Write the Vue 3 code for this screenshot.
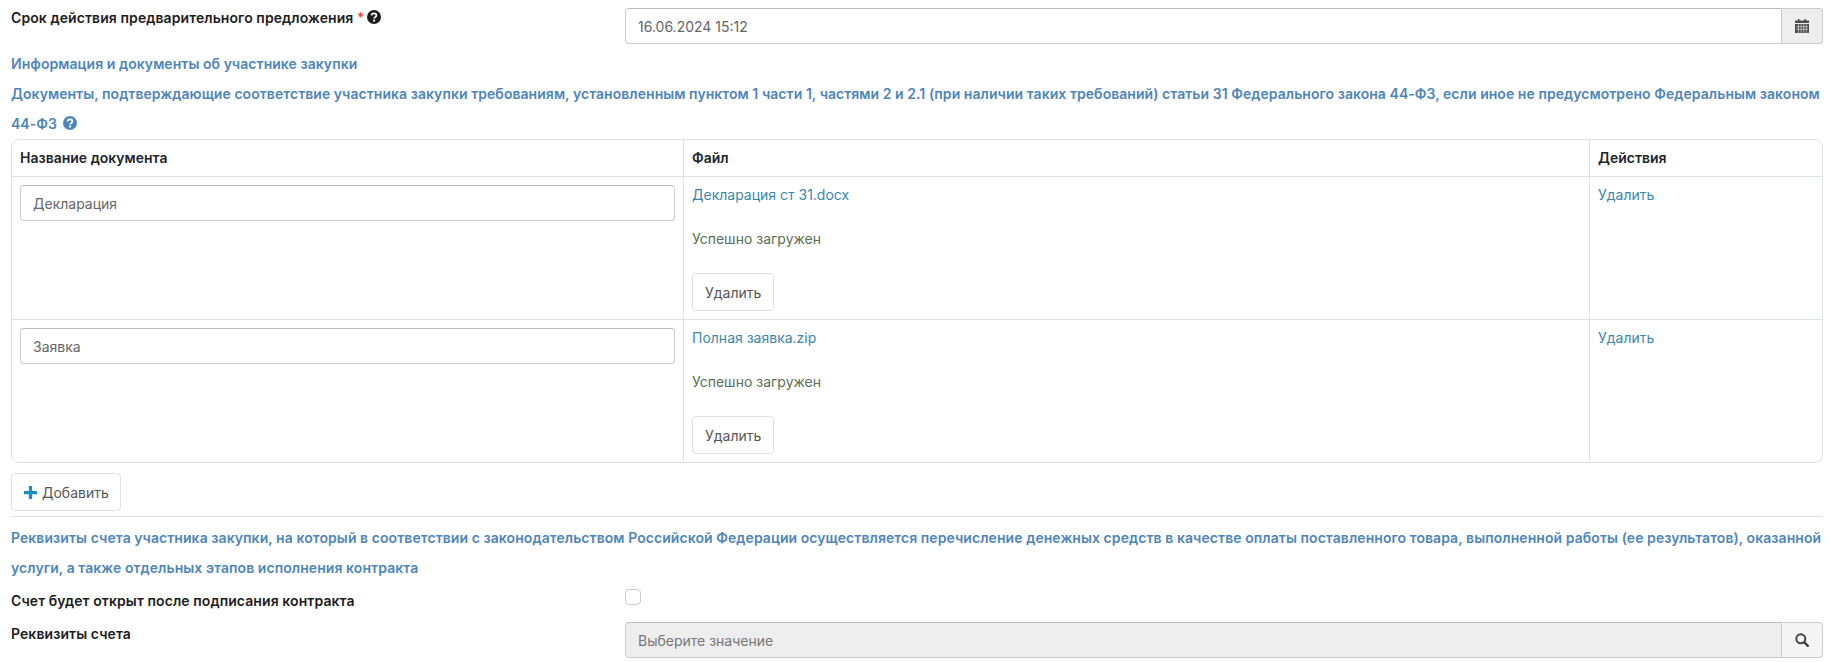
<script setup>
const rows = [
  { name: 'Декларация', file: 'Декларация ст 31.docx' },
  { name: 'Заявка', file: 'Полная заявка.zip' }
]
</script>

<template>
  <div class="page">
    <div class="form-row deadline-row">
      <label class="label">
        Срок действия предварительного предложения <span class="req">*</span>
        <svg class="help" viewBox="0 0 14 14"><circle cx="7" cy="7" r="7" fill="currentColor" /><path d="M4.600 5.400C4.700 4 5.700 3.300 7 3.300c1.400 0 2.400.8 2.400 2 0 1-.6 1.500-1.300 1.900-.6.4-.9.7-.9 1.400" fill="none" stroke="#fff" stroke-width="1.700" /><rect x="6.100" y="9.600" width="2" height="1.900" fill="#fff" /></svg>
      </label>
      <div class="input-group">
        <input class="control" value="16.06.2024 15:12" />
        <span class="addon">
          <svg class="addon-icon" viewBox="0 0 14 14"><path d="M3 0h1.500v2H3zM9.500 0H11v2H9.500z" fill="#4a4a4a" /><path d="M0 1.500h14V4H0z" fill="#4a4a4a" /><path d="M0 5h14v9H0z" fill="#4a4a4a" /><path d="M.9 7.800h12.200M.9 10.300h12.200M3.500 5v9M6.100 5v9M8.700 5v9M11.200 5v9" stroke="#eee" stroke-width=".6" /></svg>
        </span>
      </div>
    </div>

    <div class="section-title first">Информация и документы об участнике закупки</div>
    <div class="section-title">
      Документы, подтверждающие соответствие участника закупки требованиям, установленным пунктом 1 части 1, частями 2 и 2.1 (при наличии таких требований) статьи 31 Федерального закона 44-ФЗ, если иное не предусмотрено Федеральным законом 44-ФЗ
      <svg class="help" viewBox="0 0 14 14"><circle cx="7" cy="7" r="7" fill="currentColor" /><path d="M4.600 5.400C4.700 4 5.700 3.300 7 3.300c1.400 0 2.400.8 2.400 2 0 1-.6 1.500-1.300 1.900-.6.4-.9.7-.9 1.400" fill="none" stroke="#fff" stroke-width="1.700" /><rect x="6.100" y="9.600" width="2" height="1.900" fill="#fff" /></svg>
    </div>

    <div class="table">
      <div class="row head">
        <div class="cell">Название документа</div>
        <div class="cell">Файл</div>
        <div class="cell">Действия</div>
      </div>
      <div class="row doc" v-for="row in rows" :key="row.name">
        <div class="cell"><input class="control name-input" :value="row.name" /></div>
        <div class="cell file-cell">
          <a class="link">{{ row.file }}</a>
          <span class="status">Успешно загружен</span>
          <button class="btn">Удалить</button>
        </div>
        <div class="cell"><a class="link">Удалить</a></div>
      </div>
    </div>

    <button class="btn add-btn">
      <svg class="plus" viewBox="0 0 12 12"><path d="M4.500 0h3v4.500H12v3H7.500V12h-3V7.500H0v-3h4.500z" fill="#1a8fb5" /></svg>
      Добавить
    </button>
    <hr class="divider" />

    <div class="section-title account-title">
      Реквизиты счета участника закупки, на который в соответствии с законодательством Российской Федерации осуществляется перечисление денежных средств в качестве оплаты поставленного товара, выполненной работы (ее результатов), оказанной услуги, а также отдельных этапов исполнения контракта
    </div>

    <div class="form-row check-row">
      <label class="label">Счет будет открыт после подписания контракта</label>
      <div class="check-wrap"><span class="checkbox"></span></div>
    </div>
    <div class="form-row account-row">
      <label class="label">Реквизиты счета</label>
      <div class="input-group disabled">
        <input class="control" placeholder="Выберите значение" disabled />
        <span class="addon search-addon">
          <svg class="addon-icon" viewBox="0 0 14 14"><circle cx="5.800" cy="5.800" r="4.500" fill="none" stroke="#444" stroke-width="2" /><path d="M9.200 9.200l3.600 3.600" stroke="#444" stroke-width="2.400" stroke-linecap="round" /></svg>
        </span>
      </div>
    </div>
  </div>
</template>

<style scoped>
.page {
  width: 1833px;
  height: 662px;
  overflow: hidden;
  box-sizing: border-box;
  padding: 8px 10px 0 11px;
  font-family: Inter, "Noto Sans", sans-serif;
  font-size: 14px;
  color: #212529;
  background: #fff;
}

.form-row {
  display: flex;
  align-items: flex-start;
}

.label {
  width: 614px;
  flex-shrink: 0;
  font-weight: 600;
  letter-spacing: 0.08px;
  line-height: 20px;
  color: #1d1d1d;
}

.req {
  color: #d9534f;
}

.help {
  width: 14px;
  height: 14px;
  vertical-align: -1px;
  margin-left: 2px;
}

.input-group {
  flex: 1;
  display: flex;
  height: 36px;
}

.control {
  flex: 1;
  min-width: 0;
  box-sizing: border-box;
  height: 36px;
  padding: 0 12px;
  border: 1px solid #ccc;
  border-top-color: #bbb;
  border-radius: 4px 0 0 4px;
  font-family: inherit;
  font-size: 14px;
  color: #666;
  background: #fff;
  outline: none;
}

.control::placeholder {
  color: #777;
}

.addon {
  width: 41px;
  box-sizing: border-box;
  display: flex;
  align-items: center;
  justify-content: center;
  border: 1px solid #ccc;
  border-left: 0;
  border-radius: 0 4px 4px 0;
  background: #eee;
}

.addon-icon {
  width: 14px;
  height: 14px;
}

.section-title {
  font-weight: 600;
  letter-spacing: 0.05px;
  line-height: 30px;
  color: #4f86b9;
}

.section-title.first {
  margin-top: 5px;
}

.section-title .help {
  color: #4f86b9;
}

.table {
  border: 1px solid #dee2e6;
  border-radius: 8px;
}

.row {
  display: grid;
  grid-template-columns: 671px 906px 1fr;
}

.row + .row {
  border-top: 1px solid #dee2e6;
}

.cell {
  box-sizing: border-box;
  padding: 8px;
}

.cell + .cell {
  border-left: 1px solid #dee2e6;
}

.head .cell {
  height: 36px;
  line-height: 20px;
  font-weight: 600;
}

.doc .cell {
  height: 142px;
}

.name-input {
  display: block;
  width: 100%;
  border-radius: 4px;
}

.file-cell {
  display: flex;
  flex-direction: column;
  align-items: flex-start;
}

.link {
  line-height: 20px;
  color: #3c87a8;
}

.status {
  margin-top: 24px;
  line-height: 20px;
  color: #5a6e58;
}

.btn {
  height: 38px;
  padding: 0 12px;
  border: 1px solid #dee2e6;
  border-radius: 4px;
  background: #fff;
  font-family: inherit;
  font-size: 14px;
  color: #555;
}

.file-cell .btn {
  margin-top: 24px;
}

.add-btn {
  display: flex;
  align-items: center;
  gap: 5px;
  margin-top: 10px;
  padding-right: 11px;
}

.plus {
  width: 13px;
  height: 13px;
}

.divider {
  margin: 5px 0 0;
  border: 0;
  border-top: 1px solid #dee2e6;
}

.account-title {
  margin-top: 6px;
  letter-spacing: 0.065px;
}

.check-row {
  margin-top: 8px;
}

.check-wrap {
  height: 20px;
  margin-top: -2px;
}

.checkbox {
  display: block;
  width: 16px;
  height: 16px;
  box-sizing: border-box;
  border: 1px solid #ccc;
  border-radius: 4px;
  background: #fff;
}

.account-row {
  margin-top: 11px;
}

.account-row .label {
  padding-top: 2px;
}

.disabled .control {
  background: #eee;
}

.search-addon {
  background: #f5f5f5;
}
</style>

<style>
body {
  margin: 0;
  background: #fff;
}
</style>
